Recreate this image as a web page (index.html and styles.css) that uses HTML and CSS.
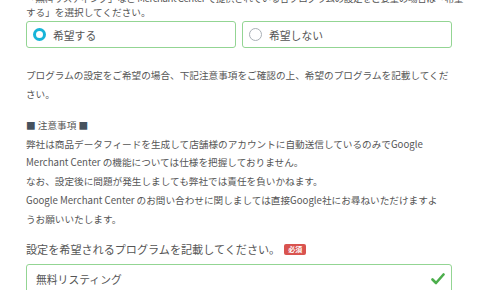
FILE: index.html
```html
<!DOCTYPE html>
<html lang="ja">
<head>
    <meta charset="UTF-8">
    <meta name="viewport" content="width=device-width, initial-scale=1.0">
    <title>プログラム設定</title>
    <link rel="stylesheet" href="styles.css">
</head>
<body>
    <div class="form">
        <p class="lead"><span class="tight">「無料リスティング」など Merchant Center で提供されている各プログラムの設定をご要望の場合は「希望</span><br>する」を選択してください。</p>

        <div class="choices">
            <label class="choice">
                <span class="radio checked"></span>
                <span class="choice-text">希望する</span>
            </label>
            <label class="choice">
                <span class="radio"></span>
                <span class="choice-text">希望しない</span>
            </label>
        </div>

        <p class="desc">プログラムの設定をご希望の場合、下記注意事項をご確認の上、希望のプログラムを記載してください。</p>

        <div class="notes">
            <p><span class="sq">■</span> 注意事項 <span class="sq">■</span></p>
            <p>弊社は商品データフィードを生成して店舗様のアカウントに自動送信しているのみでGoogle Merchant Center の機能については仕様を把握しておりません。</p>
            <p>なお、設定後に問題が発生しましても弊社では責任を負いかねます。</p>
            <p class="nowrap">Google Merchant Center のお問い合わせに関しましては直接Google社にお尋ねいただけますよ<br>うお願いいたします。</p>
        </div>

        <div class="field-label">
            設定を希望されるプログラムを記載してください。<span class="required">必須</span>
        </div>
        <div class="field">
            <span class="field-value">無料リスティング</span>
            <svg class="check" width="14" height="12" viewBox="0 0 14 12">
                <polyline points="1.5,6.5 5,10 12.5,1.5" fill="none" stroke="#4cae4c" stroke-width="2.6" stroke-linecap="round" stroke-linejoin="round"/>
            </svg>
        </div>
    </div>
</body>
</html>
```

FILE: styles.css
```css
body {
    margin: 0;
    font-family: "Noto Sans CJK JP", "Noto Sans", sans-serif;
    color: #555;
    background-color: #ffffff;
    overflow: hidden;
}
.form {
    width: 426px;
    padding-left: 26px;
}
p {
    margin: 0;
}
.lead {
    font-size: 9.65px;
    line-height: 14px;
    margin-top: -9px;
    white-space: nowrap;
}
.tight {
    letter-spacing: -0.45px;
}
.nowrap {
    white-space: nowrap;
}
.choices {
    display: flex;
    gap: 6px;
    margin-top: 2px;
}
.choice {
    display: flex;
    align-items: center;
    width: 210px;
    height: 27px;
    border: 1px solid #93d593;
    border-radius: 3px;
    padding-left: 6px;
    box-sizing: border-box;
}
.radio {
    width: 13px;
    height: 13px;
    border-radius: 50%;
    border: 1px solid #a9b0b6;
    box-sizing: border-box;
    margin-right: 7px;
    flex-shrink: 0;
}
.radio.checked {
    border: 3.5px solid #18b4d8;
}
.choice-text {
    font-size: 10.8px;
    color: #555;
}
.desc {
    font-size: 9.65px;
    line-height: 19px;
    margin-top: 18px;
}
.notes {
    margin-top: 12px;
    font-size: 9.65px;
    line-height: 18.7px;
}
.sq {
    color: #46525e;
}
.field-label {
    margin-top: 11px;
    font-size: 11.1px;
    line-height: 20px;
    display: flex;
    align-items: center;
}
.required {
    display: inline-block;
    background-color: #d9534f;
    color: #ffffff;
    font-size: 7px;
    font-weight: bold;
    line-height: 11px;
    padding: 0 4px;
    border-radius: 2px;
    margin-left: 4px;
}
.field {
    margin-top: 5px;
    display: flex;
    align-items: center;
    justify-content: space-between;
    height: 32px;
    border: 1px solid #93d593;
    border-radius: 3px;
    padding: 0 6px 2px 9px;
    box-sizing: border-box;
}
.field-value {
    font-size: 10.8px;
}
```
